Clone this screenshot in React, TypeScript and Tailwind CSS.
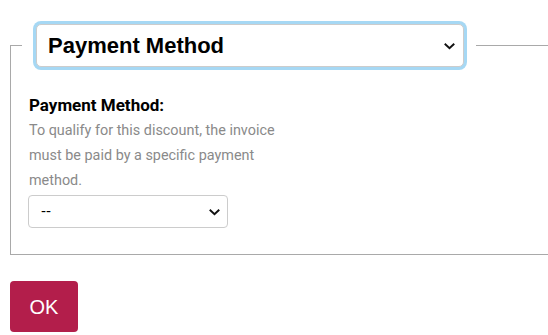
import React from "react";

function Chevron({ className }: { className?: string }) {
  return (
    <svg
      className={className}
      width="11"
      height="7"
      viewBox="0 0 11 7"
      fill="none"
      stroke="#111"
      strokeWidth="2"
      strokeLinecap="square"
    >
      <path d="M1.5 1.5 L5.5 5.2 L9.5 1.5" />
    </svg>
  );
}

export default function App() {
  return (
    <div className="w-[548px] h-[335px] bg-white overflow-hidden pt-[24px] font-['Roboto',sans-serif]">
      <fieldset className="ml-[10px] border border-r-0 border-[#a9a9a9] pl-[11px] pb-[26px]">
        <legend className="pl-[14px] pr-[12px]">
          <div className="relative w-[428px] h-[43px]">
            <select
              defaultValue="pm"
              className="w-full h-full appearance-none rounded-[5px] border border-[#cccccc] bg-white pl-[11px] text-[22px] font-bold text-black font-['Liberation_Sans',Arial,sans-serif] shadow-[0_0_0_3px_#a6d8f4] outline-none"
            >
              <option value="pm">Payment Method</option>
            </select>
            <Chevron className="absolute right-[9px] top-[19px] pointer-events-none" />
          </div>
        </legend>
        <div className="pl-[7px]">
          <div className="mt-[28px] text-[17px] leading-[20px] font-bold text-black">
            Payment Method:
          </div>
          <p className="mt-[3px] w-[262px] text-[14.4px] leading-[25px] text-[#8a8a8a]">
            To qualify for this discount, the invoice must be paid by a
            specific payment method.
          </p>
          <div className="relative mt-[2px] ml-[-1px] w-[200px] h-[33px]">
            <select
              defaultValue=""
              className="w-full h-full appearance-none rounded-[4px] border border-[#cccccc] bg-white pl-[12px] text-[15px] text-black font-['Liberation_Sans',Arial,sans-serif] outline-none"
            >
              <option value="">--</option>
            </select>
            <Chevron className="absolute right-[8px] top-[14px] pointer-events-none" />
          </div>
        </div>
      </fieldset>
      <button className="mt-[26px] ml-[10px] w-[68px] h-[51px] rounded-[4px] bg-[#b31e4b] text-white text-[20px] font-['Liberation_Sans',Arial,sans-serif]">
        OK
      </button>
    </div>
  );
}
